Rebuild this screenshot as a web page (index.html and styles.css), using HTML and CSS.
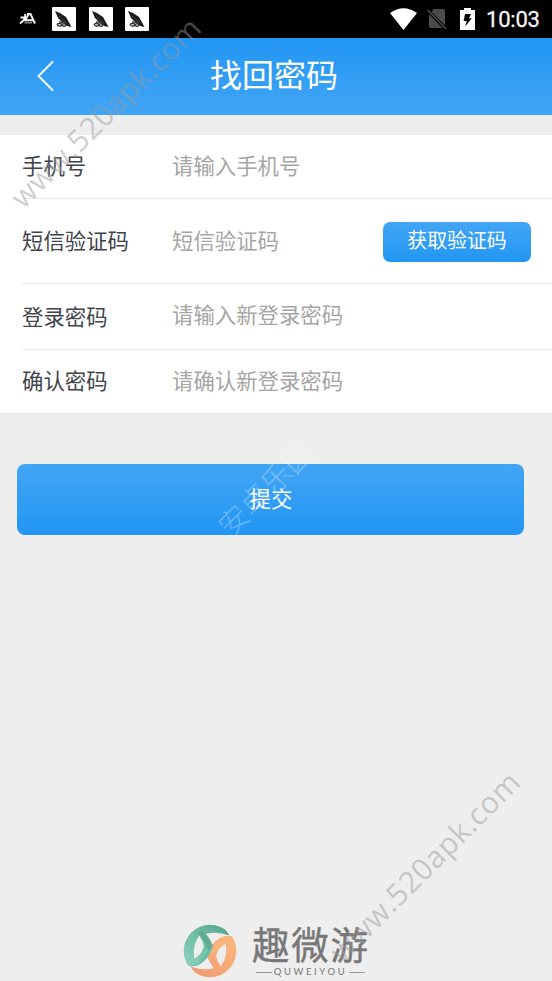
FILE: index.html
```html
<!DOCTYPE html>
<html lang="zh-CN">
<head>
<meta charset="utf-8">
<title>找回密码</title>
<link rel="stylesheet" href="styles.css">
</head>
<body>
<svg class="defs" aria-hidden="true">
  <defs>
    <symbol id="app" viewBox="0 0 24 24">
      <rect width="24" height="24" rx="1" fill="#fff"/>
      <path d="M3 4 L8 6 L14 10 L19.5 20 L15 19 L10 15 L6 11 Z" fill="#1c1c1c"/>
      <path d="M7 9 L15 16" stroke="#777" stroke-width=".4"/>
      <ellipse cx="7.5" cy="17.8" rx="2.3" ry="1.4" fill="#ccc" stroke="#333" stroke-width="1.2"/>
      <ellipse cx="12" cy="18" rx="1.8" ry="1.4" fill="#ccc" stroke="#333" stroke-width="1.2"/>
      <path d="M7 15 L13 15.5" stroke="#444" stroke-width="1.4"/>
    </symbol>
  </defs>
</svg>
<div class="screen">
  <div class="status">
    <svg class="mark" viewBox="0 0 18 14"><path d="M1.5 5.5 H8.5 M6.5 2 L5 8 L1 11.5 M8 2 H11.5 L16 11.5 M9.5 2.5 L6 8.5 M5 8.2 H14" fill="none" stroke="#f4f4f4" stroke-width="1.9"/><path d="M5.5 10.8 H13" stroke="#999" stroke-width="1.3"/></svg>
    <svg class="app"><use href="#app"/></svg>
    <svg class="app"><use href="#app"/></svg>
    <svg class="app"><use href="#app"/></svg>
    <span class="spacer"></span>
    <svg class="wifi" viewBox="0 0 27 22"><path d="M0 5 Q13.5 -4.5 27 5 L13.5 22 Z" fill="#fff"/></svg>
    <svg class="sim" viewBox="0 0 20 22"><path d="M6.5 1 H16 Q18 1 18 3 V17.5 L4.5 4 Z" fill="#4b4b4b"/><path d="M2 6 L15.5 20 H4 Q2 20 2 18 Z" fill="#4b4b4b"/><path d="M.7 2 L19 21" stroke="#505050" stroke-width="1.4"/></svg>
    <svg class="battery" viewBox="0 0 15 22"><path d="M4 0 H11 V2 H15 V22 H0 V2 H4 Z" fill="#fff"/><path d="M5 6 H11 L9 10.3 H11.8 L5.2 18.5 L6.7 13 H3.6 Z" fill="#000"/></svg>
    <span class="time">10:03</span>
  </div>
  <header class="header">
    <svg class="back" viewBox="0 0 18 32"><path d="M16 1.5 L1.5 16 L16 30.5" fill="none" stroke="#fff" stroke-width="1.8"/></svg>
    <h1 class="title">找回密码</h1>
  </header>
  <form class="form">
    <div class="row row-phone"><span class="label">手机号</span><span class="hint">请输入手机号</span></div>
    <div class="row row-code"><span class="label">短信验证码</span><span class="hint">短信验证码</span><button type="button" class="code">获取验证码</button></div>
    <div class="row row-new"><span class="label">登录密码</span><span class="hint">请输入新登录密码</span></div>
    <div class="row row-confirm"><span class="label">确认密码</span><span class="hint">请确认新登录密码</span></div>
  </form>
  <button type="button" class="submit">提交</button>
  <footer class="brand">
    <svg class="logo" viewBox="4 4 160 160">
      <defs>
        <clipPath id="ball"><circle cx="84" cy="84" r="78"/></clipPath>
        <linearGradient id="green" gradientUnits="userSpaceOnUse" x1="15" y1="130" x2="125" y2="15"><stop offset="0" stop-color="#8cd2bb"/><stop offset=".55" stop-color="#70bda6"/><stop offset="1" stop-color="#5aa892"/></linearGradient>
        <linearGradient id="orange" gradientUnits="userSpaceOnUse" x1="15" y1="130" x2="125" y2="15"><stop offset="0" stop-color="#fcb87d"/><stop offset="1" stop-color="#f09a73"/></linearGradient>
        <path id="blade" d="M0 0 H116 L142 38 Q106 25 72 33 Q82 44 94 70 Q80 108 54 123 Q36 133 12 126 L0 110 Z M52 38 Q30 72 38 106 Q58 98 66 70 Q63 53 52 38 Z" fill-rule="evenodd"/>
      </defs>
      <g clip-path="url(#ball)">
        <use href="#blade" fill="url(#green)"/>
        <use href="#blade" fill="url(#orange)" transform="rotate(180 84 84)"/>
        <path d="M58 22 Q78 42 94 70 L83 93 Q73 58 48 33 Z" fill="#529f88" opacity=".55"/>
        <path d="M157 40 Q116 42 91 75 L76 101 Q91 91 104 83 Q118 66 140 60 L164 66 Z" fill="#fcb47c"/>
        <path d="M12 126 Q34 129 51 117 L83 78 L94 70 Q80 108 54 123 Q36 133 12 126 Z" fill="#70bea7"/>
      </g>
    </svg>
    <div class="words">
      <div class="name">趣微游</div>
      <div class="latin"><i class="dash"></i><span>QUWEIYOU</span><i class="dash"></i></div>
    </div>
  </footer>
  <svg class="watermarks" viewBox="0 0 552 981">
    <text class="site" transform="translate(23.5 210) rotate(-45)" textLength="254">www.520apk.com</text>
    <text class="site" transform="translate(342.5 964) rotate(-45)" textLength="254">www.520apk.com</text>
    <text class="park" transform="translate(231 539) rotate(-45)">安卓乐园</text>
  </svg>
</div>
</body>
</html>
```

FILE: styles.css
```css
* { box-sizing: border-box; }
body { margin: 0; background: #eee; font-family: "Noto Sans CJK SC", sans-serif; }
button { border: 0; padding: 0; font-family: inherit; color: #fff; background: linear-gradient(#42a5f5, #2196f3); }
.defs { position: absolute; width: 0; height: 0; }
.screen { position: relative; width: 552px; height: 981px; overflow: hidden; display: flex; flex-direction: column; background: #eee; }

.status { height: 38px; flex: none; background: #000; display: flex; align-items: center; padding: 0 13px 0 19px; }
.mark { width: 18px; height: 14px; margin-right: 15px; }
.app { width: 24px; height: 24px; margin-right: 12.7px; }
.spacer { flex: 1; }
.wifi { width: 27px; height: 22px; margin-right: 10px; }
.sim { width: 20px; height: 22px; margin-right: 13px; }
.battery { width: 15px; height: 22px; margin-right: 11px; }
.time { font: 400 22px/38px Roboto, sans-serif; -webkit-text-stroke: .3px #f4f4f4; width: 53px; color: #f4f4f4; white-space: nowrap; padding-top: 2px; letter-spacing: -.2px; }

.header { height: 77px; flex: none; display: flex; align-items: center; padding-left: 37px; background: linear-gradient(#2196f3, #42a5f5); }
.back { width: 18px; height: 32px; margin-bottom: 1px; }
.title { margin: 0 0 7px 155px; font-size: 32px; line-height: 48px; font-weight: 400; color: #fff; }

.form { margin-top: 20px; background: #fff; border-bottom: 1px solid #e2e2e2; flex: none; }
.row { margin-left: 22px; display: flex; align-items: center; font-size: 21.4px; line-height: 32px; padding-bottom: 3px; border-bottom: 1px solid #ebebeb; }
.label { width: 150px; color: #40434a; }
.hint { color: #a5a5a5; }
.row-phone { height: 64px; }
.row-code { height: 85px; padding-bottom: 2px; }
.row-new { height: 66px; padding-bottom: 2px; }
.row-new .hint { margin-top: -3px; }
.row-confirm { height: 63px; border-bottom: 0; }
.code { width: 148px; height: 40px; margin: 3px 21px 0 auto; border-radius: 7px; font-size: 19.9px; line-height: 30px; padding-bottom: 4px; }

.submit { width: 507px; height: 71px; margin: 50px 0 0 17px; border-radius: 8px; font-size: 21.4px; line-height: 32px; padding: 0 0 4px 1px; flex: none; }

.brand { margin-top: auto; height: 60px; padding-left: 183px; display: flex; align-items: flex-start; }
.logo { width: 54px; height: 54px; margin-top: 3px; }
.words { margin-left: 15px; width: 118px; color: #777; }
.name { font-size: 37.5px; line-height: 44px; height: 44px; letter-spacing: 1.7px; font-weight: 400; -webkit-text-stroke: .4px #777; white-space: nowrap; }
.latin { display: flex; align-items: center; justify-content: space-between; margin: 1px 5px 0 4px; font: 9.5px/12px Lato, sans-serif; letter-spacing: 2.6px; white-space: nowrap; }
.dash { width: 16px; height: 1px; background: #999; }

.watermarks { position: absolute; inset: 0; width: 552px; height: 981px; pointer-events: none; }
.site { font: 30px "Open Sans", sans-serif; fill: #989898; fill-opacity: .48; }
.park { font: 300 30px "Noto Sans CJK SC", sans-serif; fill: #fff; fill-opacity: .3; }
```
